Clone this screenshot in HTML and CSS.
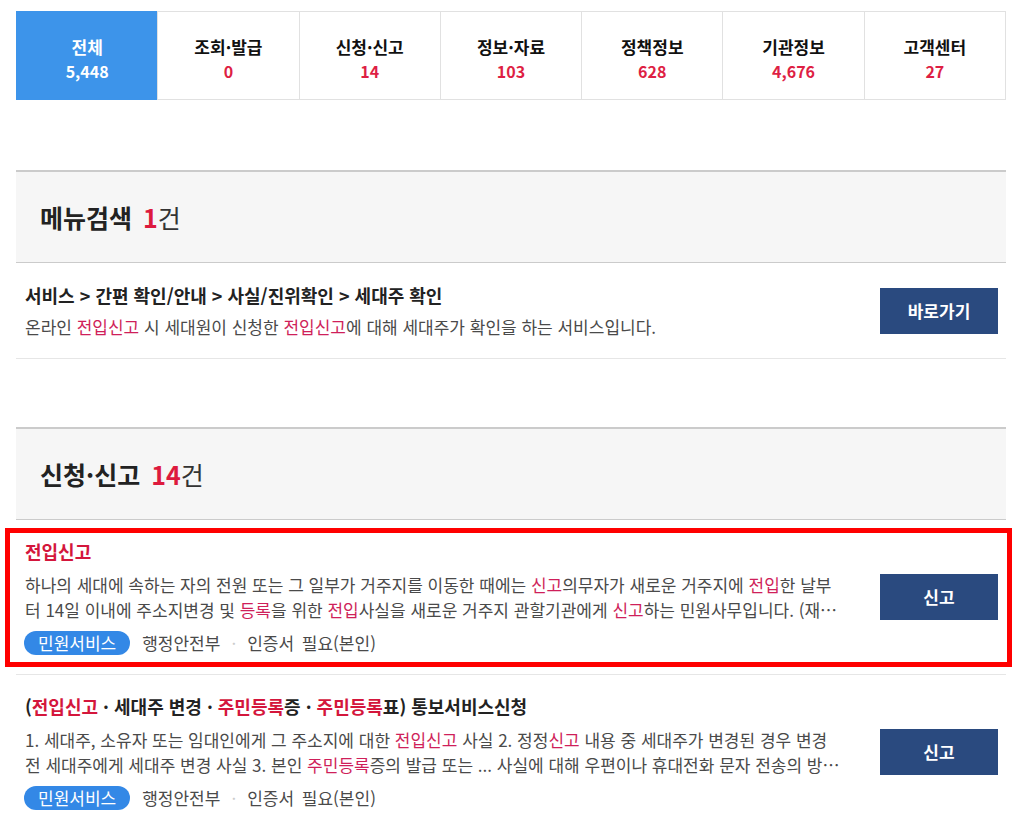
FILE: index.html
```html
<!DOCTYPE html>
<html lang="ko">
<head>
  <meta charset="utf-8">
  <title>통합검색 결과</title>
  <link rel="stylesheet" href="styles.css">
</head>
<body>

<div class="wrap">
  <ul class="tabs">
    <li class="tab active"><strong>전체</strong><span>5,448</span></li>
    <li class="tab"><strong>조회·발급</strong><span>0</span></li>
    <li class="tab"><strong>신청·신고</strong><span>14</span></li>
    <li class="tab"><strong>정보·자료</strong><span>103</span></li>
    <li class="tab"><strong>정책정보</strong><span>628</span></li>
    <li class="tab"><strong>기관정보</strong><span>4,676</span></li>
    <li class="tab"><strong>고객센터</strong><span>27</span></li>
  </ul>

  <section class="result">
    <h2 class="result-head">메뉴검색 <em>1</em><span>건</span></h2>
    <ul class="result-list">
      <li class="item menu-item">
        <div class="item-body">
          <p class="item-title">서비스 &gt; 간편 확인/안내 &gt; 사실/진위확인 &gt; 세대주 확인</p>
          <p class="item-desc">온라인 <mark>전입신고</mark> 시 세대원이 신청한 <mark>전입신고</mark>에 대해 세대주가 확인을 하는 서비스입니다.</p>
        </div>
        <a class="btn" href="#">바로가기</a>
      </li>
    </ul>
  </section>

  <section class="result">
    <h2 class="result-head">신청·신고 <em>14</em><span>건</span></h2>
    <ul class="result-list">
      <li class="item marked">
        <div class="item-body">
          <p class="item-title"><em>전입신고</em></p>
          <p class="item-desc clamp">하나의 세대에 속하는 자의 전원 또는 그 일부가 거주지를 이동한 때에는 <mark>신고</mark>의무자가 새로운 거주지에 <mark>전입</mark>한 날부터 14일 이내에 주소지변경 및 <mark>등록</mark>을 위한 <mark>전입</mark>사실을 새로운 거주지 관할기관에게 <mark>신고</mark>하는 민원사무입니다. (재외국민의 경우 주민등록 신고 포함)</p>
          <div class="item-meta">
            <span class="pill">민원서비스</span>
            <span class="org">행정안전부</span>
            <span class="dot">·</span>
            <span class="cert">인증서 필요(본인)</span>
          </div>
        </div>
        <a class="btn" href="#">신고</a>
      </li>
      <li class="item">
        <div class="item-body">
          <p class="item-title">(<em>전입신고</em> · 세대주 변경 · <em>주민등록</em>증 · <em>주민등록</em>표) 통보서비스신청</p>
          <p class="item-desc clamp">1. 세대주, 소유자 또는 임대인에게 그 주소지에 대한 <mark>전입신고</mark> 사실 2. 정정<mark>신고</mark> 내용 중 세대주가 변경된 경우 변경 전 세대주에게 세대주 변경 사실 3. 본인 <mark>주민등록</mark>증의 발급 또는 ... 사실에 대해 우편이나 휴대전화 문자 전송의 방법으로 알려주는 서비스입니다.</p>
          <div class="item-meta">
            <span class="pill">민원서비스</span>
            <span class="org">행정안전부</span>
            <span class="dot">·</span>
            <span class="cert">인증서 필요(본인)</span>
          </div>
        </div>
        <a class="btn" href="#">신고</a>
      </li>
    </ul>
  </section>
</div>

</body>
</html>
```

FILE: styles.css
```css
body {
  margin: 0;
  font-family: "Noto Sans CJK KR", "Noto Sans", sans-serif;
  color: #222;
  background: #fff;
}
ul, p, h2 {
  margin: 0;
  padding: 0;
  list-style: none;
}
em {
  font-style: normal;
}
.wrap {
  width: 990px;
  margin: 11px 16px 0;
}

/* tabs */
.tabs {
  display: flex;
}
.tab {
  flex: 1;
  height: 89px;
  box-sizing: border-box;
  padding-top: 23px;
  border: 1px solid #e1e1e1;
  margin-left: -1px;
  text-align: center;
}
.tab:first-child {
  margin-left: 0;
}
.tab strong,
.tab span {
  display: block;
  line-height: 24px;
}
.tab strong {
  font-size: 17px;
  color: #111;
}
.tab span {
  font-size: 16px;
  font-weight: bold;
  color: #de1f44;
}
.tab.active {
  background-color: #3d94ea;
  border-color: #3d94ea;
}
.tab.active strong,
.tab.active span {
  color: #fff;
}

/* result sections */
.result {
  margin-top: 70px;
}
.result + .result {
  margin-top: 68px;
}
.result-head {
  height: 90px;
  line-height: 90px;
  padding: 0 24px;
  background: #f6f6f6;
  border-top: 2px solid #cbcbcb;
  border-bottom: 1px solid #cbcbcb;
  font-size: 25px;
  font-weight: bold;
  color: #222;
}
.result-head em {
  margin-left: 4px;
  color: #dd1a3e;
}
.result-head span {
  font-weight: normal;
  color: #333;
}

.item {
  position: relative;
  display: flex;
  align-items: center;
  padding: 19px 8px 19px 9px;
  border-bottom: 1px solid #e6e6e6;
}
.menu-item {
  padding-top: 20px;
}
.item-body {
  width: 822px;
}
.item-title {
  font-size: 18px;
  font-weight: bold;
  line-height: 24px;
  color: #222;
}
.item-title em {
  color: #d4163c;
}
.item-desc {
  margin-top: 7px;
  font-size: 17px;
  line-height: 25px;
  color: #4a4a4a;
}
.item-desc.clamp {
  margin-top: 9px;
  display: -webkit-box;
  -webkit-box-orient: vertical;
  -webkit-line-clamp: 2;
  overflow: hidden;
}
.item-desc mark {
  background: none;
  color: #cf1f5a;
}
.item-meta {
  display: flex;
  align-items: center;
  margin-top: 8px;
  height: 25px;
  font-size: 17px;
  color: #4a4a4a;
}
.pill {
  padding: 0 14px;
  line-height: 24px;
  border-radius: 12px;
  background: #3388e6;
  color: #fff;
  margin-left: -1px;
}
.org {
  margin-left: 12px;
}
.dot {
  margin: 0 11px;
  color: #ccc;
}
.cert {
  word-spacing: 3px;
}
.btn {
  margin-left: auto;
  width: 118px;
  height: 46px;
  line-height: 46px;
  text-align: center;
  background: #2a4a7f;
  color: #fff;
  font-size: 17px;
  font-weight: bold;
  text-decoration: none;
}

/* annotation box over the highlighted result */
.marked::after {
  content: "";
  position: absolute;
  top: 8px;
  bottom: 7px;
  left: -11px;
  right: -6px;
  border: 5px solid #ff0000;
  pointer-events: none;
}
```
